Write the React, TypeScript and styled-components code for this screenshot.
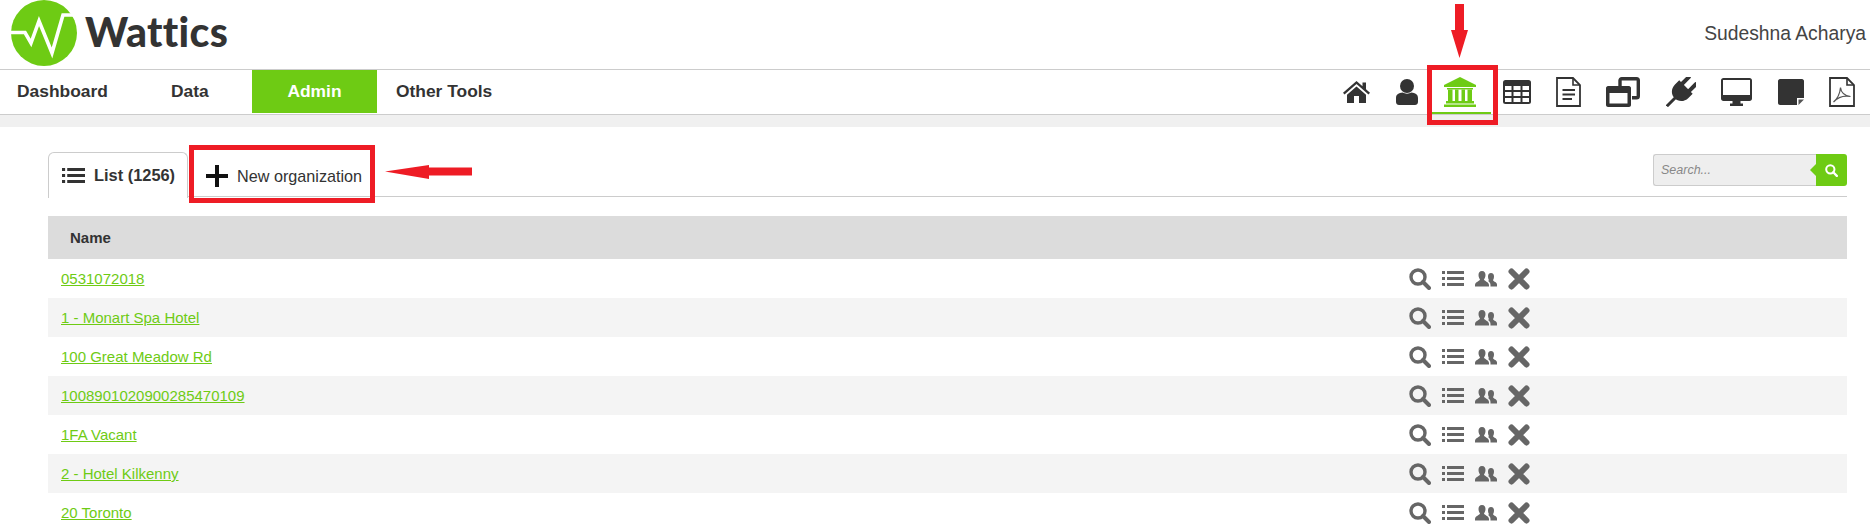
import styled, { createGlobalStyle } from "styled-components";

const GREEN = "#6ecb14";

const organizations = [
  "0531072018",
  "1 - Monart Spa Hotel",
  "100 Great Meadow Rd",
  "1008901020900285470109",
  "1FA Vacant",
  "2 - Hotel Kilkenny",
  "20 Toronto",
];

const menu = [
  { label: "Dashboard", width: 171 },
  { label: "Data", width: 81 },
  { label: "Admin", width: 125, active: true },
  { label: "Other Tools", width: 120 },
];

function HomeIcon() {
  return (
    <svg width="27" height="22" viewBox="0 0 27 22" fill="#333">
      <path d="M13.500 0 L19.500 5.200 V1.500 H23 V8.200 L27 11.700 L25.500 13.400 L13.500 3 L1.500 13.400 L0 11.700 Z" />
      <path d="M13.500 5.500 L23 13.700 V22 H16 V15 H11 V22 H4 V13.700 Z" />
    </svg>
  );
}

function UserIcon() {
  return (
    <svg width="22" height="26" viewBox="0 0 22 26" fill="#333">
      <ellipse cx="11" cy="7" rx="7" ry="7" />
      <path d="M0 19 C0 15 3 14 6.500 13.500 C9 15 13 15 15.500 13.500 C19 14 22 15 22 19 V23 C22 25 20.500 26 19 26 H3 C1.500 26 0 25 0 23 Z" />
    </svg>
  );
}

function BankIcon() {
  return (
    <svg width="34" height="30" viewBox="0 0 34 30" fill={GREEN}>
      <path d="M17 0 L33 8 V10 H1 V8 Z" />
      <path d="M4 11 H30 V12.500 H4 Z" />
      <path d="M5 12.500 H9.500 V24 H5 Z M12 12.500 H15.500 V24 H12 Z M18.500 12.500 H22 V24 H18.500 Z M24.500 12.500 H29 V24 H24.500 Z" />
      <path d="M3 24 H31 V26.500 H3 Z M1 27.500 H33 V30 H1 Z" />
    </svg>
  );
}

function TableIcon() {
  return (
    <svg width="28" height="24" viewBox="0 0 28 24">
      <rect width="28" height="24" rx="2.500" fill="#333" />
      <path
        fill="#fff"
        d="M2 6 H8.500 V10 H2 Z M10.500 6 H17.500 V10 H10.500 Z M19.500 6 H26 V10 H19.500 Z M2 12 H8.500 V16 H2 Z M10.500 12 H17.500 V16 H10.500 Z M19.500 12 H26 V16 H19.500 Z M2 18 H8.500 V22 H2 Z M10.500 18 H17.500 V22 H10.500 Z M19.500 18 H26 V22 H19.500 Z"
      />
    </svg>
  );
}

function DocIcon() {
  return (
    <svg width="25" height="30" viewBox="0 0 25 30" fill="none" stroke="#333">
      <path strokeWidth="1.800" d="M1 1 H17 L24 8 V29 H1 Z" />
      <path strokeWidth="1.600" d="M17 1 V8 H24" />
      <path strokeWidth="1.900" d="M6.500 13 H19 M6.500 17.500 H19 M6.500 22 H16" />
    </svg>
  );
}

function WindowsIcon() {
  return (
    <svg width="34" height="30" viewBox="0 0 34 30">
      <path
        fill="none"
        stroke="#333"
        strokeWidth="3.400"
        d="M14 9 V3.500 C14 2.300 14.700 1.700 15.800 1.700 H30.500 C31.700 1.700 32.300 2.300 32.300 3.500 V19 C32.300 20.200 31.700 20.800 30.500 20.800 H26"
      />
      <path
        fill="#333"
        fillRule="evenodd"
        d="M2 9 H23 C24 9 25 10 25 11 V28 C25 29 24 30 23 30 H2 C1 30 0 29 0 28 V11 C0 10 1 9 2 9 Z M3.500 16 V26.500 H21.500 V16 Z"
      />
    </svg>
  );
}

function PlugIcon() {
  return (
    <svg width="30" height="30" viewBox="0 0 30 30" fill="#333">
      <g transform="rotate(45 15 15)">
        <rect x="8" y="-3" width="4" height="13" rx="2" />
        <rect x="18" y="-3" width="4" height="13" rx="2" />
        <path d="M5.500 8 H24.500 V14 C24.500 20 20 24 15 24 C10 24 5.500 20 5.500 14 Z" />
        <rect x="13.500" y="22" width="3" height="13" />
      </g>
    </svg>
  );
}

function MonitorIcon() {
  return (
    <svg width="31" height="28" viewBox="0 0 31 28" fill="#333">
      <path
        fillRule="evenodd"
        d="M2.500 0 H28.500 C30 0 31 1 31 2.500 V20.500 C31 22 30 23 28.500 23 H2.500 C1 23 0 22 0 20.500 V2.500 C0 1 1 0 2.500 0 Z M2 2 V17 H29 V2 Z"
      />
      <path d="M11.500 23 H19.500 V25.500 H22 V28 H9 V25.500 H11.500 Z" />
    </svg>
  );
}

function NoteIcon() {
  return (
    <svg width="26" height="26" viewBox="0 0 26 26" fill="#333">
      <path d="M2 0 H24 C25 0 26 1 26 2 V19 H19 V26 H2 C1 26 0 25 0 24 V2 C0 1 1 0 2 0 Z" />
      <path fill="#555" d="M20.500 20.500 H26 L20.500 26 Z" />
    </svg>
  );
}

function PdfIcon() {
  return (
    <svg width="26" height="30" viewBox="0 0 26 30" fill="none" stroke="#333">
      <path strokeWidth="1.800" d="M1 1 H18 L25 8 V29 H1 Z" />
      <path strokeWidth="1.600" d="M18 1 V8 H25" />
      <path
        strokeWidth="1.200"
        stroke="#555"
        d="M4.500 25 C8 22 11 16 11.500 10.500 C12 16 15 18.500 21.500 19.500 C16 18.500 9 20 4.500 25 Z"
      />
    </svg>
  );
}

function ListIcon({ color, size, height }: { color: string; size: number; height: number }) {
  return (
    <svg width={size} height={height} viewBox="0 0 22 15" preserveAspectRatio="none" fill={color}>
      <path d="M0 0 H3 V3 H0 Z M5 0 H22 V3 H5 Z M0 6 H3 V9 H0 Z M5 6 H22 V9 H5 Z M0 12 H3 V15 H0 Z M5 12 H22 V15 H5 Z" />
    </svg>
  );
}

function SearchGlyph({ color, size }: { color: string; size: number }) {
  return (
    <svg width={size} height={size} viewBox="0 0 22 22" fill="none" stroke={color}>
      <circle cx="9" cy="9" r="7" strokeWidth="3.400" />
      <path d="M14 14 L20 20" strokeWidth="4" strokeLinecap="round" />
    </svg>
  );
}

function UsersIcon() {
  return (
    <svg width="22" height="16" viewBox="0 0 22 16" fill="#666">
      <path d="M7 0 C9.500 0 10.500 2 10.500 4 C10.500 6 9.500 7.500 9 8.500 C9 10 14 11 14 14 V15.500 H0 V14 C0 11 5 10 5 8.500 C4.500 7.500 3.500 6 3.500 4 C3.500 2 4.500 0 7 0 Z" />
      <path d="M16 2 C18 2 19 3.500 19 5.500 C19 7 18.500 8.500 18 9 C18 10.500 22 11 22 13.500 V15.500 H15.500 V14 C15.500 12 14 10.500 13 10 C13.500 9.500 14 9.300 14 9 C13.500 8.500 13 7 13 5.500 C13 3.500 14 2 16 2 Z" />
    </svg>
  );
}

function CrossIcon() {
  return (
    <svg width="22" height="22" viewBox="0 0 22 22" stroke="#666" strokeWidth="6" strokeLinecap="round">
      <path d="M3.500 3.500 L18.500 18.500 M18.500 3.500 L3.500 18.500" />
    </svg>
  );
}

function PlusIcon() {
  return (
    <svg width="22" height="22" viewBox="0 0 22 22" fill="#111">
      <path d="M9 0 H13 V9 H22 V13 H13 V22 H9 V13 H0 V9 H9 Z" />
    </svg>
  );
}

export default function App() {
  return (
    <Page>
      <GlobalStyle />
      <Header>
        <Logo>
          <svg width="66" height="66" viewBox="0 0 66 66">
            <circle cx="33" cy="33" r="33" fill={GREEN} />
            <path
              d="M0 32.500 H14 L20 43 L28 21 L41 53 L52 15 H66"
              fill="none"
              stroke="#fff"
              strokeWidth="3.600"
            />
          </svg>
          <LogoText>Wattics</LogoText>
        </Logo>
        <UserName>Sudeshna Acharya</UserName>
      </Header>

      <NavBar>
        <Menu>
          {menu.map((m) => (
            <MenuItem key={m.label} $width={m.width} $active={m.active}>
              {m.label}
            </MenuItem>
          ))}
        </Menu>
        <Tools>
          <Tool><HomeIcon /></Tool>
          <Tool><UserIcon /></Tool>
          <Tool $active><BankIcon /></Tool>
          <Tool><TableIcon /></Tool>
          <Tool><DocIcon /></Tool>
          <Tool><WindowsIcon /></Tool>
          <Tool><PlugIcon /></Tool>
          <Tool><MonitorIcon /></Tool>
          <Tool><NoteIcon /></Tool>
          <Tool><PdfIcon /></Tool>
        </Tools>
      </NavBar>
      <Band />

      <Content>
        <TabBar>
          <ActiveTab>
            <ListIcon color="#333" size={23} height={15} />
            List (1256)
          </ActiveTab>
          <NewTab>
            <PlusIcon />
            New organization
          </NewTab>
          <SearchBox>
            <SearchInput placeholder="Search..." />
            <SearchButton>
              <SearchGlyph color="#fff" size={13} />
            </SearchButton>
          </SearchBox>
        </TabBar>

        <TableHead>Name</TableHead>
        {organizations.map((name) => (
          <Row key={name}>
            <NameLink href="#">{name}</NameLink>
            <Actions>
              <SearchGlyph color="#666" size={22} />
              <ListIcon color="#666" size={22} height={15} />
              <UsersIcon />
              <CrossIcon />
            </Actions>
          </Row>
        ))}
      </Content>

      <BankHighlight />
      <NewOrgHighlight />
      <DownArrow width="17" height="54" viewBox="0 0 17 54" fill="#ee1c25">
        <path d="M4 0 H13 V26 H17 L8.500 54 L0 26 H4 Z" />
      </DownArrow>
      <LeftArrow width="88" height="14" viewBox="0 0 88 14" fill="#ee1c25">
        <path d="M0 6.500 L44 0 V2.500 H87 V10.500 H44 V14 Z" />
      </LeftArrow>
    </Page>
  );
}

const GlobalStyle = createGlobalStyle`
  html, body {
    margin: 0;
    height: 530px;
    overflow: hidden;
    background: #fff;
  }
  body {
    font-family: "Liberation Sans", Arial, sans-serif;
    color: #333;
  }
`;

const Page = styled.div`
  position: relative;
  width: 1870px;
  height: 530px;
  overflow: hidden;
`;

const Header = styled.header`
  height: 69px;
  display: flex;
  justify-content: space-between;
  border-bottom: 1px solid #ccc;
  padding: 0 4px 0 11px;
`;

const Logo = styled.div`
  display: flex;
  align-items: flex-start;
  gap: 8px;
`;

const LogoText = styled.span`
  font-family: "Lato", sans-serif;
  font-weight: 900;
  font-size: 41px;
  letter-spacing: 0.3px;
  line-height: 64px;
  color: #333;
`;

const UserName = styled.div`
  font-size: 19.300px;
  line-height: 22px;
  padding-top: 23px;
  color: #444;
`;

const NavBar = styled.nav`
  height: 44px;
  display: flex;
  justify-content: space-between;
  border-bottom: 1px solid #ccc;
  padding-right: 15px;
`;

const Menu = styled.div`
  display: flex;
  height: 43px;
`;

const MenuItem = styled.div<{ $width: number; $active?: boolean }>`
  width: ${(p) => p.$width}px;
  box-sizing: border-box;
  font-size: 17.400px;
  font-weight: 700;
  line-height: 42px;
  background: ${(p) => (p.$active ? GREEN : "transparent")};
  color: ${(p) => (p.$active ? "#fff" : "#333")};
  text-align: ${(p) => (p.$active ? "center" : "left")};
  padding-left: ${(p) => (p.$active ? "0" : "17px")};
  &:nth-child(2) {
    padding-left: 0;
  }
  &:nth-child(4) {
    padding-left: 19px;
  }
`;

const Tools = styled.div`
  display: flex;
  gap: 25.400px;
  height: 44px;
  align-items: center;
`;

const Tool = styled.div<{ $active?: boolean }>`
  position: relative;
  display: flex;
  align-items: center;
  height: 30px;
  margin-top: -1px;
  &::after {
    content: "";
    display: ${(p) => (p.$active ? "block" : "none")};
    position: absolute;
    left: -11px;
    right: -14px;
    top: 35px;
    height: 2px;
    background: ${GREEN};
  }
`;

const Band = styled.div`
  height: 12px;
  background: #f0f0f0;
`;

const Content = styled.main`
  padding: 25px 23px 0 48px;
`;

const TabBar = styled.div`
  height: 44px;
  display: flex;
  align-items: flex-start;
  border-bottom: 1px solid #ccc;
  margin-bottom: 19px;
`;

const ActiveTab = styled.div`
  width: 140px;
  height: 46px;
  box-sizing: border-box;
  display: flex;
  align-items: center;
  gap: 9px;
  padding-left: 13px;
  border: 1px solid #ccc;
  border-bottom: none;
  border-radius: 6px 6px 0 0;
  background: #fff;
  font-size: 16.400px;
  font-weight: 700;
`;

const NewTab = styled.div`
  height: 48px;
  display: flex;
  align-items: center;
  gap: 9px;
  padding-left: 18px;
  font-size: 16.200px;
  color: #333;
`;

const SearchBox = styled.div`
  display: flex;
  margin: 2px 0 0 auto;
  width: 194px;
  height: 32px;
`;

const SearchInput = styled.input`
  flex: 1;
  min-width: 0;
  box-sizing: border-box;
  padding: 0 7px;
  border: 1px solid #ccc;
  border-right: none;
  border-radius: 3px 0 0 3px;
  background: #eee;
  outline: none;
  font-family: "Liberation Sans", Arial, sans-serif;
  font-size: 12.500px;
  font-style: italic;
  &::placeholder {
    color: #888;
    opacity: 1;
  }
`;

const SearchButton = styled.div`
  position: relative;
  width: 31px;
  display: flex;
  align-items: center;
  justify-content: center;
  background: ${GREEN};
  border-radius: 0 3px 3px 0;
  &::before {
    content: "";
    position: absolute;
    left: -6px;
    top: 10px;
    border-style: solid;
    border-width: 6px 6px 6px 0;
    border-color: transparent ${GREEN} transparent transparent;
  }
`;

const TableHead = styled.div`
  height: 43px;
  box-sizing: border-box;
  padding-left: 22px;
  background: #dcdcdc;
  font-size: 15px;
  font-weight: 700;
  line-height: 43px;
`;

const Row = styled.div`
  height: 39px;
  display: flex;
  align-items: center;
  padding-left: 13px;
  &:nth-child(even) {
    background: #f4f4f4;
  }
`;

const NameLink = styled.a`
  width: 1348px;
  color: ${GREEN};
  font-size: 15px;
`;

const Actions = styled.div`
  display: flex;
  align-items: center;
  gap: 11px;
`;

const BankHighlight = styled.div`
  position: absolute;
  left: 1427px;
  top: 65px;
  width: 61px;
  height: 50px;
  border: 5px solid #ee1c25;
`;

const NewOrgHighlight = styled.div`
  position: absolute;
  left: 189px;
  top: 145px;
  width: 176px;
  height: 48px;
  border: 5px solid #ee1c25;
`;

const DownArrow = styled.svg`
  position: absolute;
  left: 1451px;
  top: 4px;
`;

const LeftArrow = styled.svg`
  position: absolute;
  left: 385px;
  top: 165px;
`;
